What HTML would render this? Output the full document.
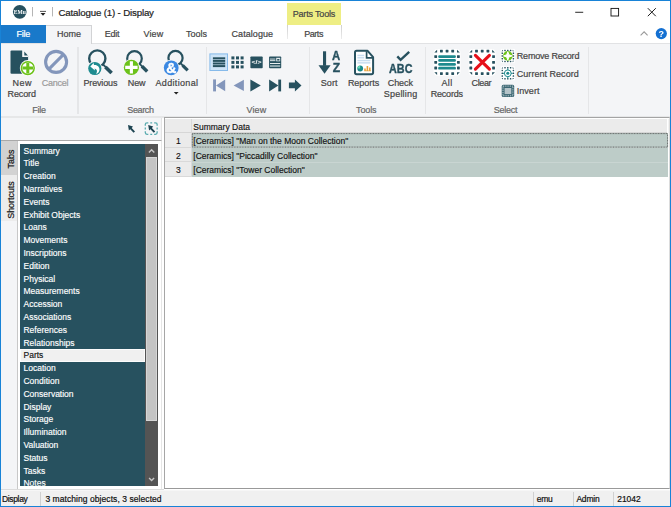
<!DOCTYPE html>
<html><head><meta charset="utf-8"><title>Catalogue (1) - Display</title>
<style>
*{box-sizing:border-box;margin:0;padding:0}
html,body{width:671px;height:507px;overflow:hidden;background:#fff}
body{position:relative;font-family:"Liberation Sans",sans-serif;font-size:9px;color:#444}
.a{position:absolute}
.t{position:absolute;white-space:nowrap;line-height:11px;height:11px;font-size:9px;color:#444;-webkit-text-stroke:0.2px}
.c{text-align:center;transform:translateX(-50%)}
.gl{color:#666}
.li{position:absolute;left:20.2px;width:124.6px;height:12.8px;line-height:12.8px;font-size:8.5px;color:#fff;padding-left:3.3px;padding-top:0.7px;white-space:nowrap;-webkit-text-stroke:0.15px}
.sep{position:absolute;top:46.5px;height:67.3px;width:1.4px;background:#e5e6e8}
.st{position:absolute;top:493.5px;white-space:nowrap;line-height:11px;font-size:8.5px;color:#111}
.gt{position:absolute;white-space:nowrap;line-height:14.4px;font-size:8.5px;color:#111;-webkit-text-stroke:0.15px}
svg{position:absolute;overflow:visible}
</style></head><body>
<!-- title bar -->
<div class="a" style="left:0;top:0;width:671px;height:25px;background:#fff"></div>
<!-- ribbon bg -->
<div class="a" style="left:0;top:25px;width:671px;height:18px;background:#fff"></div>
<div class="a" id="ribbon" style="left:0;top:43px;width:671px;height:74px;background:#f4f5f7"></div>
<div class="a" style="left:0;top:116px;width:671px;height:2.1px;background:#e6e7e8"></div><div class="a" style="left:0;top:118.1px;width:671px;height:0.8px;background:#fdfdfd"></div>
<!-- tabs -->
<div class="a" style="left:0;top:42.7px;width:671px;height:1px;background:#e1e2e4"></div>
<div class="a" style="left:1px;top:24.8px;width:44.6px;height:17.9px;background:#1979ca"></div>
<div class="a" style="left:45.6px;top:24.8px;width:46.5px;height:19px;background:#f4f5f7;border:1px solid #d2d3d5;border-bottom:none;border-left:none"></div>
<div class="a" style="left:287.2px;top:3.2px;width:54.2px;height:21.6px;background:#eeee84"></div>
<div class="a" style="left:286.9px;top:24.8px;width:1px;height:14.4px;background:linear-gradient(#cfcfcf,#ececec)"></div><div class="a" style="left:340.7px;top:24.8px;width:1px;height:14.4px;background:linear-gradient(#cfcfcf,#ececec)"></div>
<div class="t" style="left:58.50px;top:7.14px;font-size:9.7px;letter-spacing:-0.164px;color:#222">Catalogue (1) - Display</div>
<div class="t" style="left:16.40px;top:28.88px;font-size:9.0px;letter-spacing:-0.233px;color:#fff">File</div>
<div class="t" style="left:57.10px;top:28.88px;font-size:9.0px;letter-spacing:-0.071px;color:#444">Home</div>
<div class="t" style="left:104.70px;top:28.88px;font-size:9.0px;letter-spacing:-0.202px;color:#444">Edit</div>
<div class="t" style="left:143.40px;top:28.88px;font-size:9.0px;letter-spacing:0.177px;color:#444">View</div>
<div class="t" style="left:186.10px;top:28.88px;font-size:9.0px;letter-spacing:-0.002px;color:#444">Tools</div>
<div class="t" style="left:231.50px;top:28.88px;font-size:9.0px;letter-spacing:0.071px;color:#444">Catalogue</div>
<div class="t" style="left:304.30px;top:28.88px;font-size:9.0px;letter-spacing:-0.477px;color:#444">Parts</div>
<div class="t" style="left:292.70px;top:8.68px;font-size:9.0px;letter-spacing:-0.175px;color:#444">Parts Tools</div>

<!-- ribbon labels -->
<div class="t" style="left:12.60px;top:78.38px;font-size:9.0px;letter-spacing:0.436px;color:#444">New</div>
<div class="t" style="left:7.60px;top:88.88px;font-size:9.0px;letter-spacing:-0.123px;color:#444">Record</div>
<div class="t" style="left:41.80px;top:78.38px;font-size:9.0px;letter-spacing:-0.243px;color:#9b9b9b">Cancel</div>
<div class="t" style="left:32.30px;top:104.88px;font-size:9.0px;letter-spacing:-0.266px;color:#666">File</div>
<div class="t" style="left:83.50px;top:78.38px;font-size:9.0px;letter-spacing:-0.160px;color:#444">Previous</div>
<div class="t" style="left:127.80px;top:78.38px;font-size:9.0px;letter-spacing:-0.163px;color:#444">New</div>
<div class="t" style="left:155.50px;top:78.38px;font-size:9.0px;letter-spacing:0.330px;color:#444">Additional</div>
<div class="t" style="left:127.30px;top:104.88px;font-size:9.0px;letter-spacing:-0.362px;color:#666">Search</div>
<div class="t" style="left:246.50px;top:104.88px;font-size:9.0px;letter-spacing:0.111px;color:#666">View</div>
<div class="t" style="left:320.70px;top:78.38px;font-size:9.0px;letter-spacing:0.131px;color:#444">Sort</div>
<div class="t" style="left:347.90px;top:78.38px;font-size:9.0px;letter-spacing:-0.035px;color:#444">Reports</div>
<div class="t" style="left:387.80px;top:78.38px;font-size:9.0px;letter-spacing:-0.106px;color:#444">Check</div>
<div class="t" style="left:383.70px;top:88.88px;font-size:9.0px;letter-spacing:0.225px;color:#444">Spelling</div>
<div class="t" style="left:356.00px;top:104.88px;font-size:9.0px;letter-spacing:-0.101px;color:#666">Tools</div>
<div class="t" style="left:441.50px;top:78.38px;font-size:9.0px;letter-spacing:0.350px;color:#444">All</div>
<div class="t" style="left:430.70px;top:88.88px;font-size:9.0px;letter-spacing:-0.203px;color:#444">Records</div>
<div class="t" style="left:471.50px;top:78.38px;font-size:9.0px;letter-spacing:-0.352px;color:#444">Clear</div>
<div class="t" style="left:516.80px;top:51.18px;font-size:9.0px;letter-spacing:-0.202px;color:#444">Remove Record</div>
<div class="t" style="left:516.80px;top:69.08px;font-size:9.0px;letter-spacing:0.029px;color:#444">Current Record</div>
<div class="t" style="left:516.80px;top:86.38px;font-size:9.0px;letter-spacing:0.018px;color:#444">Invert</div>
<div class="t" style="left:493.70px;top:104.88px;font-size:9.0px;letter-spacing:-0.242px;color:#666">Select</div>
<div class="sep" style="left:77.2px"></div>
<div class="sep" style="left:205.6px"></div>
<div class="sep" style="left:309px"></div>
<div class="sep" style="left:424.6px"></div>
<div class="sep" style="left:587.7px"></div>

<!-- left toolbar strip -->
<div class="a" style="left:0;top:118.2px;width:161.6px;height:22.6px;background:#f4f5f7;border-right:1px solid #e3e3e3;border-bottom:1px solid #a9a9a9"></div>
<!-- left panel -->
<div class="a" style="left:0;top:140.8px;width:17.6px;height:348.4px;background:#f4f5f7;border-right:1px solid #c8c8c8"></div>
<div class="a" style="left:1px;top:141px;width:16px;height:34.4px;background:#d2d2d2"></div>
<div class="a" style="left:1px;top:175.4px;width:16px;height:45.6px;background:#ececec"></div>
<div class="a" style="left:1px;top:141px;width:16px;height:34.4px"><div class="t" style="left:10.4px;top:17.9px;font-size:8.9px;color:#111;transform:translate(-50%,-50%) rotate(-90deg)">Tabs</div></div>
<div class="a" style="left:1px;top:175.4px;width:16px;height:45.6px"><div class="t" style="left:10.4px;top:24.5px;font-size:8.9px;color:#111;transform:translate(-50%,-50%) rotate(-90deg)">Shortcuts</div></div>
<div class="a" style="left:20.2px;top:144px;width:124.6px;height:341.8px;background:#27515f;overflow:hidden"></div>
<div class="a" style="left:0;top:0;width:671px;height:485.8px;overflow:hidden;clip-path:inset(144px 0 0 0)">
<div class="li" style="top:144.0px">Summary</div>
<div class="li" style="top:156.8px">Title</div>
<div class="li" style="top:169.6px">Creation</div>
<div class="li" style="top:182.4px">Narratives</div>
<div class="li" style="top:195.2px">Events</div>
<div class="li" style="top:208.0px">Exhibit Objects</div>
<div class="li" style="top:220.8px">Loans</div>
<div class="li" style="top:233.6px">Movements</div>
<div class="li" style="top:246.4px">Inscriptions</div>
<div class="li" style="top:259.2px">Edition</div>
<div class="li" style="top:272.0px">Physical</div>
<div class="li" style="top:284.8px">Measurements</div>
<div class="li" style="top:297.6px">Accession</div>
<div class="li" style="top:310.4px">Associations</div>
<div class="li" style="top:323.2px">References</div>
<div class="li" style="top:336.0px">Relationships</div>
<div class="li" style="top:348.8px;background:#f0f0f0;color:#111;box-shadow:inset 0 0 0 0.8px #fff">Parts</div>
<div class="li" style="top:361.6px">Location</div>
<div class="li" style="top:374.4px">Condition</div>
<div class="li" style="top:387.2px">Conservation</div>
<div class="li" style="top:400.0px">Display</div>
<div class="li" style="top:412.8px">Storage</div>
<div class="li" style="top:425.6px">Illumination</div>
<div class="li" style="top:438.4px">Valuation</div>
<div class="li" style="top:451.2px">Status</div>
<div class="li" style="top:464.0px">Tasks</div>
<div class="li" style="top:476.8px">Notes</div>
</div>
<!-- scrollbar -->
<div class="a" style="left:144.9px;top:144.2px;width:12.85px;height:341.6px;background:#545454"></div>
<div class="a" style="left:146.1px;top:157.2px;width:10.8px;height:264.3px;background:#c4c4c4;border:0.6px solid #d6d6d6"></div>
<svg style="left:0;top:0" width="671" height="507" viewBox="0 0 671 507"><path d="M148.9 152.5 L151.6 149.8 L154.3 152.5" fill="none" stroke="#c6c6c6" stroke-width="1.45"/><path d="M149.1 478 L151.6 480.5 L154.1 478" fill="none" stroke="#c6c6c6" stroke-width="1.45"/></svg>
<div class="a" style="left:160.6px;top:140.8px;width:1.4px;height:348.4px;background:#e6e6e6"></div>

<!-- grid -->
<div class="a" style="left:164.1px;top:116.9px;width:506px;height:372.6px;background:#fff;border:1px solid #999;border-top-color:#a4a4a4;border-left-color:#a6a6a6;border-right-color:#dcdcdc"></div>
<div class="a" style="left:165.3px;top:119px;width:502.2px;height:14.1px;background:#ebebeb;border-bottom:1px solid #d6d6d6"></div><div class="a" style="left:667.5px;top:119px;width:1.7px;height:14.1px;background:#f2f2f2"></div>
<div class="a" style="left:165.3px;top:133.1px;width:26px;height:43.4px;background:#ebebeb"></div>
<div class="a" style="left:191.5px;top:133.1px;width:476.4px;height:43.5px;background:#bdccc8"></div>
<div class="a" style="left:190.9px;top:118.5px;width:1px;height:58px;background:#d9d9d9"></div>
<div class="a" style="left:165.3px;top:147px;width:26px;height:1px;background:#d9d9d9"></div>
<div class="a" style="left:165.3px;top:161.4px;width:26px;height:1px;background:#d9d9d9"></div>
<div class="a" style="left:165.3px;top:175.8px;width:26px;height:1px;background:#d9d9d9"></div>
<div class="a" style="left:191.5px;top:147.1px;width:476.6px;height:0.8px;background:#c9d5d2"></div>
<div class="a" style="left:191.5px;top:161.5px;width:476.6px;height:0.8px;background:#c9d5d2"></div>
<svg style="left:0;top:0" width="671" height="200" viewBox="0 0 671 200"><rect x="192.3" y="133.6" width="475.3" height="13.5" fill="none" stroke="#4a4a4a" stroke-width="0.8" stroke-dasharray="1 0.6"/></svg>
<div class="gt" style="left:193.3px;top:119.5px">Summary Data</div>
<div class="gt" style="left:178.3px;top:134.2px;transform:translateX(-50%)">1</div>
<div class="gt" style="left:178.3px;top:148.6px;transform:translateX(-50%)">2</div>
<div class="gt" style="left:178.3px;top:163px;transform:translateX(-50%)">3</div>
<div class="gt" style="left:193.3px;top:134.2px">[Ceramics] "Man on the Moon Collection"</div>
<div class="gt" style="left:193.3px;top:148.6px">[Ceramics] "Piccadilly Collection"</div>
<div class="gt" style="left:193.3px;top:163px">[Ceramics] "Tower Collection"</div>

<!-- status bar -->
<div class="a" style="left:0;top:488.6px;width:164px;height:1px;background:#dcdcdc"></div><div class="a" id="status" style="left:0;top:489.5px;width:671px;height:17.5px;background:#f0f0f0;border-top:1px solid #f6f6f6"></div>
<div class="t" style="left:1.90px;top:493.65px;font-size:8.5px;letter-spacing:-0.329px;color:#111">Display</div>
<div class="t" style="left:45.40px;top:493.65px;font-size:8.5px;letter-spacing:0.064px;color:#111">3 matching objects, 3 selected</div>
<div class="a" style="left:40.4px;top:491.5px;width:1px;height:14px;background:#d0d0d0"></div>
<div class="a" style="left:533px;top:491.5px;width:1px;height:14px;background:#d0d0d0"></div>
<div class="a" style="left:573px;top:491.5px;width:1px;height:14px;background:#d0d0d0"></div>
<div class="a" style="left:613.4px;top:491.5px;width:1px;height:14px;background:#d0d0d0"></div>
<div class="t" style="left:536.70px;top:493.65px;font-size:8.5px;letter-spacing:-0.216px;color:#111">emu</div>
<div class="t" style="left:576.40px;top:493.65px;font-size:8.5px;letter-spacing:-0.199px;color:#111">Admin</div>
<div class="t" style="left:617.20px;top:493.65px;font-size:8.5px;letter-spacing:-0.035px;color:#111">21042</div>

<svg style="left:0;top:0;will-change:transform" width="671" height="507" viewBox="0 0 671 507" font-family="Liberation Sans, sans-serif">
<!-- logo + quick access -->
<circle cx="19.75" cy="11.8" r="6.85" fill="#27515f"/>
<text x="19.8" y="13.9" font-size="6.4" font-weight="bold" font-family="Liberation Serif, serif" fill="#fff" text-anchor="middle" textLength="12" lengthAdjust="spacingAndGlyphs">EMu</text>
<rect x="32" y="7" width="1" height="9.4" fill="#b5b5b5"/>
<rect x="52" y="7" width="1" height="9.4" fill="#b5b5b5"/>
<rect x="40" y="10.9" width="6" height="0.85" fill="#333"/>
<path d="M40.5 13.1 H45.5 L43 15.8 Z" fill="#222"/>
<!-- window controls -->
<rect x="575.2" y="11.8" width="8" height="0.9" fill="#111"/>
<rect x="611" y="8.4" width="7.6" height="7.6" fill="none" stroke="#111" stroke-width="0.9"/>
<path d="M647.8 8.2 L655.8 16.2 M655.8 8.2 L647.8 16.2" stroke="#111" stroke-width="0.95" fill="none"/>
<path d="M640.6 35.4 L644.1 31.9 L647.6 35.4" stroke="#9a9a9a" stroke-width="1.1" fill="none"/>
<circle cx="661.3" cy="33.6" r="5.6" fill="#1470d2"/>
<text x="661.3" y="36.8" font-size="9" font-weight="bold" fill="#fff" text-anchor="middle">?</text>

<!-- New Record -->
<path d="M11.6 50.5 H22.6 L28.1 56.2 V72.7 Q28.1 73.7 27.1 73.7 H11.6 Q10.5 73.7 10.5 72.7 V51.5 Q10.5 50.5 11.6 50.5 Z" fill="#27515f"/>
<path d="M23.2 50 L28.6 55.6 V57 H22.2 V50 Z" fill="#f4f5f7"/>
<path d="M24.3 51.6 L27.9 55.4 H24.3 Z" fill="#27515f"/>
<circle cx="27.8" cy="68.1" r="8" fill="#fcfcfd"/>
<circle cx="27.8" cy="68.1" r="6.4" fill="#fff" stroke="#6cc21a" stroke-width="1.5"/>
<path d="M27.8 62.8 V73.4 M22.5 68.1 H33.1" stroke="#6cc21a" stroke-width="3" fill="none"/>
<!-- Cancel -->
<circle cx="56.1" cy="61.9" r="10.5" fill="none" stroke="#8396bb" stroke-width="3.1"/>
<path d="M48.9 69.1 L63.3 54.7" stroke="#8396bb" stroke-width="3.1" fill="none"/>

<!-- Previous -->
<circle cx="97.3" cy="58.5" r="8.1" fill="none" stroke="#27515f" stroke-width="2.4"/>
<path d="M102.6 64 L106 67.4" stroke="#27515f" stroke-width="1.8" fill="none"/>
<path d="M105.4 66.9 L111.6 73.1" stroke="#27515f" stroke-width="3.6" fill="none"/>
<circle cx="94.8" cy="68.5" r="7.4" fill="#f4f5f7"/>
<circle cx="94.8" cy="68.5" r="6.6" fill="#1f8c90"/>
<path d="M90.3 66.6 L93.6 63 L94 65 C97.4 64.6 100 67 99.4 70.6 C99 72.6 97.4 73.8 96 74 C97.4 72.2 97.6 69.4 94.6 68.6 L95 70.6 Z" fill="#fff"/>

<!-- New search -->
<circle cx="134.5" cy="58.5" r="7.3" fill="none" stroke="#27515f" stroke-width="2.2"/>
<path d="M139.4 63.6 L142.6 66.8" stroke="#27515f" stroke-width="1.8" fill="none"/>
<path d="M141.9 66.3 L147.2 71.5" stroke="#27515f" stroke-width="3.4" fill="none"/>
<circle cx="131.4" cy="67.4" r="8.3" fill="#f4f5f7"/>
<circle cx="131.4" cy="67.4" r="7.6" fill="#6cc21a"/>
<path d="M131.4 61.2 V73.6 M125.2 67.4 H137.6" stroke="#fff" stroke-width="3.1" fill="none"/>

<!-- Additional -->
<circle cx="175.5" cy="58" r="7.1" fill="none" stroke="#27515f" stroke-width="2.2"/>
<path d="M180.3 63 L183.4 66.1" stroke="#27515f" stroke-width="1.8" fill="none"/>
<path d="M182.6 65.4 L187.7 70.4" stroke="#27515f" stroke-width="3.2" fill="none"/>
<circle cx="171.2" cy="67.8" r="8.1" fill="#f4f5f7"/>
<circle cx="171.2" cy="67.8" r="7.4" fill="#3b88e2"/>
<text x="171.3" y="72.7" font-size="14" font-weight="bold" fill="#fff" stroke="#fff" stroke-width="0.4" text-anchor="middle">&amp;</text>
<path d="M173.8 92 H178.6 L176.2 94.6 Z" fill="#222"/>

<!-- View group -->
<rect x="209.9" y="53.9" width="17.6" height="16.6" fill="#cde4f7" stroke="#86baea" stroke-width="1"/>
<g fill="#27515f">
<rect x="212.9" y="57.3" width="12.3" height="2"/><rect x="212.9" y="59.9" width="12.3" height="2"/><rect x="212.9" y="62.5" width="12.3" height="2"/><rect x="212.9" y="65.1" width="12.3" height="2"/>
<rect x="231.4" y="56.4" width="3" height="3"/><rect x="236" y="56.4" width="3" height="3"/><rect x="240.6" y="56.4" width="3" height="3"/>
<rect x="231.4" y="60.9" width="3" height="3"/><rect x="236" y="60.9" width="3" height="3"/><rect x="240.6" y="60.9" width="3" height="3"/>
<rect x="231.4" y="65.4" width="3" height="3"/><rect x="236" y="65.4" width="3" height="3"/><rect x="240.6" y="65.4" width="3" height="3"/>
<rect x="250.4" y="56.4" width="12.3" height="11.8" rx="0.8"/>
<rect x="269.1" y="56.4" width="12.1" height="11.8" rx="0.8"/>
</g>
<text x="256.55" y="64.3" font-size="5.6" font-weight="bold" fill="#fff" text-anchor="middle" textLength="10" lengthAdjust="spacingAndGlyphs">&lt;/&gt;</text>
<g fill="#e6ecee">
<rect x="270" y="58.6" width="5.4" height="0.9"/><rect x="270" y="60.2" width="5.4" height="0.9"/>
<rect x="276.2" y="57.8" width="4" height="3.5"/>
<rect x="270" y="63" width="10.2" height="1"/>
<rect x="270" y="65.2" width="10.2" height="1.7" fill="#9fb3ba"/>
</g>
<rect x="277.2" y="59" width="2.2" height="1.6" fill="#27515f"/>
<g fill="#8396bb">
<rect x="213.1" y="79.4" width="2.9" height="12"/><path d="M216 85.4 L225.2 79.5 V91.3 Z"/>
<path d="M233.6 85.4 L243.9 79.7 V91.1 Z"/>
</g>
<g fill="#27515f">
<path d="M250.4 79.6 L260.8 85.5 L250.4 91.4 Z"/>
<path d="M269.1 79.6 L278.4 85.5 L269.1 91.4 Z"/><rect x="278.3" y="79.6" width="2.8" height="11.8"/>
<path d="M288.9 82.6 H294.9 V79.4 L301.5 85.5 L294.9 91.6 V88.3 H288.9 Z"/>
</g>

<!-- Sort -->
<g fill="#27515f">
<rect x="323" y="51.3" width="3.1" height="14.5"/>
<path d="M318.5 65.3 H330.6 L324.55 73.7 Z"/>
</g>
<text x="336.2" y="60.1" font-size="12" font-weight="bold" fill="#27515f" stroke="#27515f" stroke-width="0.35" text-anchor="middle" textLength="8.2" lengthAdjust="spacingAndGlyphs">A</text>
<text x="336.4" y="71.6" font-size="12" font-weight="bold" fill="#27515f" stroke="#27515f" stroke-width="0.35" text-anchor="middle" textLength="7.4" lengthAdjust="spacingAndGlyphs">Z</text>
<!-- Reports -->
<path d="M356.6 50.7 H367.4 L373.1 57.2 V72.6 Q373.1 74.3 371.4 74.3 H356.6 Q355 74.3 355 72.6 V52.4 Q355 50.7 356.6 50.7 Z" fill="#fff" stroke="#27515f" stroke-width="2" stroke-linejoin="round"/>
<path d="M366.6 51.2 V57.8 H372.8" fill="none" stroke="#27515f" stroke-width="1.7"/>
<g fill="#c9def0">
<rect x="357.4" y="54.7" width="6.8" height="1.5"/><rect x="357.4" y="57" width="6.8" height="1.5"/>
<rect x="357.4" y="59.8" width="13" height="1.5"/><rect x="357.4" y="62.1" width="13" height="1.5"/>
</g>
<circle cx="360.2" cy="68.5" r="2.9" fill="#1b8b8c"/>
<path d="M360.2 68.5 V65.7 A2.8 2.8 0 0 0 357.4 68.5 Z" fill="#63d8b4"/>
<path d="M364.2 70.6 V68.6 H365.8 V70.6 H366.6 V66 H368.2 V70.6 H369 V67.6 H370.6 V70.6 H371 V71.3 H364.2 Z" fill="#e9a23b"/>
<!-- ABC -->
<path d="M397.3 56.4 L400.6 59.8 L409.2 51.9" fill="none" stroke="#27515f" stroke-width="2.4"/>
<text x="400.75" y="73.2" font-size="12" font-weight="bold" fill="#27515f" stroke="#27515f" stroke-width="0.35" text-anchor="middle" textLength="23.4" lengthAdjust="spacingAndGlyphs">ABC</text>

<!-- All Records -->
<rect x="433.6" y="48.9" width="26.9" height="26.8" rx="4" fill="#fff"/><g fill="#27515f"><path d="M437.10 52.45 L437.10 49.65 L434.30 52.45 Z"/><rect x="434.30" y="55.20" width="2.80" height="2.80" rx="0.4"/><rect x="434.30" y="60.90" width="2.80" height="2.80" rx="0.4"/><rect x="434.30" y="66.60" width="2.80" height="2.80" rx="0.4"/><path d="M437.10 72.20 L437.10 75.00 L434.30 72.20 Z"/><rect x="440.00" y="49.65" width="2.80" height="2.80" rx="0.4"/><rect x="440.00" y="72.20" width="2.80" height="2.80" rx="0.4"/><rect x="445.65" y="49.65" width="2.80" height="2.80" rx="0.4"/><rect x="445.65" y="72.20" width="2.80" height="2.80" rx="0.4"/><rect x="451.30" y="49.65" width="2.80" height="2.80" rx="0.4"/><rect x="451.30" y="72.20" width="2.80" height="2.80" rx="0.4"/><path d="M457.00 52.45 L457.00 49.65 L459.80 52.45 Z"/><rect x="457.00" y="55.20" width="2.80" height="2.80" rx="0.4"/><rect x="457.00" y="60.90" width="2.80" height="2.80" rx="0.4"/><rect x="457.00" y="66.60" width="2.80" height="2.80" rx="0.4"/><path d="M457.00 72.20 L457.00 75.00 L459.80 72.20 Z"/></g>
<g fill="#1e8a8e">
<rect x="438.2" y="55.2" width="17.7" height="2.8" rx="1.2"/><rect x="438.2" y="59" width="17.7" height="2.8" rx="1.2"/><rect x="438.2" y="62.9" width="17.7" height="2.8" rx="1.2"/><rect x="438.2" y="66.8" width="17.7" height="2.8" rx="1.2"/>
</g>
<!-- Clear -->
<rect x="468.7" y="48.9" width="26.9" height="26.8" rx="4" fill="#fff"/><g fill="#27515f"><path d="M472.20 52.45 L472.20 49.65 L469.40 52.45 Z"/><rect x="469.40" y="55.20" width="2.80" height="2.80" rx="0.4"/><rect x="469.40" y="60.90" width="2.80" height="2.80" rx="0.4"/><rect x="469.40" y="66.60" width="2.80" height="2.80" rx="0.4"/><path d="M472.20 72.20 L472.20 75.00 L469.40 72.20 Z"/><rect x="475.10" y="49.65" width="2.80" height="2.80" rx="0.4"/><rect x="475.10" y="72.20" width="2.80" height="2.80" rx="0.4"/><rect x="480.80" y="49.65" width="2.80" height="2.80" rx="0.4"/><rect x="480.80" y="72.20" width="2.80" height="2.80" rx="0.4"/><rect x="486.50" y="49.65" width="2.80" height="2.80" rx="0.4"/><rect x="486.50" y="72.20" width="2.80" height="2.80" rx="0.4"/><path d="M492.15 52.45 L492.15 49.65 L494.95 52.45 Z"/><rect x="492.15" y="55.20" width="2.80" height="2.80" rx="0.4"/><rect x="492.15" y="60.90" width="2.80" height="2.80" rx="0.4"/><rect x="492.15" y="66.60" width="2.80" height="2.80" rx="0.4"/><path d="M492.15 72.20 L492.15 75.00 L494.95 72.20 Z"/></g>
<path d="M475.4 55.4 L489.4 69.1 M489.4 55.4 L475.4 69.1" stroke="#e6101a" stroke-width="3.1" stroke-linecap="round" fill="none"/>

<!-- Remove Record -->
<rect x="500.8" y="48.9" width="14.1" height="14" fill="#fff"/><g fill="#27515f"><path d="M503.00 51.15 L503.00 49.65 L501.50 51.15 Z"/><rect x="501.50" y="52.40" width="1.50" height="1.50" rx="0.4"/><rect x="501.50" y="55.15" width="1.50" height="1.50" rx="0.4"/><rect x="501.50" y="57.95" width="1.50" height="1.50" rx="0.4"/><path d="M503.00 60.70 L503.00 62.20 L501.50 60.70 Z"/><rect x="504.25" y="49.65" width="1.50" height="1.50" rx="0.4"/><rect x="504.25" y="60.70" width="1.50" height="1.50" rx="0.4"/><rect x="507.05" y="49.65" width="1.50" height="1.50" rx="0.4"/><rect x="507.05" y="60.70" width="1.50" height="1.50" rx="0.4"/><rect x="509.85" y="49.65" width="1.50" height="1.50" rx="0.4"/><rect x="509.85" y="60.70" width="1.50" height="1.50" rx="0.4"/><path d="M512.65 51.15 L512.65 49.65 L514.15 51.15 Z"/><rect x="512.65" y="52.40" width="1.50" height="1.50" rx="0.4"/><rect x="512.65" y="55.15" width="1.50" height="1.50" rx="0.4"/><rect x="512.65" y="57.95" width="1.50" height="1.50" rx="0.4"/><path d="M512.65 60.70 L512.65 62.20 L514.15 60.70 Z"/></g>
<circle cx="507.8" cy="55.9" r="4.8" fill="#6cc21a"/>
<path d="M507.8 51.7 L508.9 54.8 L512 55.9 L508.9 57 L507.8 60.1 L506.7 57 L503.6 55.9 L506.7 54.8 Z" fill="#fff" stroke="#fff" stroke-width="1" stroke-linejoin="round"/>
<!-- Current Record -->
<rect x="500.8" y="66.3" width="14.1" height="14" fill="#fff"/><g fill="#27515f"><path d="M503.00 68.45 L503.00 66.95 L501.50 68.45 Z"/><rect x="501.50" y="69.75" width="1.50" height="1.50" rx="0.4"/><rect x="501.50" y="72.55" width="1.50" height="1.50" rx="0.4"/><rect x="501.50" y="75.35" width="1.50" height="1.50" rx="0.4"/><path d="M503.00 78.10 L503.00 79.60 L501.50 78.10 Z"/><rect x="504.25" y="66.95" width="1.50" height="1.50" rx="0.4"/><rect x="504.25" y="78.10" width="1.50" height="1.50" rx="0.4"/><rect x="507.05" y="66.95" width="1.50" height="1.50" rx="0.4"/><rect x="507.05" y="78.10" width="1.50" height="1.50" rx="0.4"/><rect x="509.85" y="66.95" width="1.50" height="1.50" rx="0.4"/><rect x="509.85" y="78.10" width="1.50" height="1.50" rx="0.4"/><path d="M512.65 68.45 L512.65 66.95 L514.15 68.45 Z"/><rect x="512.65" y="69.75" width="1.50" height="1.50" rx="0.4"/><rect x="512.65" y="72.55" width="1.50" height="1.50" rx="0.4"/><rect x="512.65" y="75.35" width="1.50" height="1.50" rx="0.4"/><path d="M512.65 78.10 L512.65 79.60 L514.15 78.10 Z"/></g>
<circle cx="507.8" cy="73.3" r="3.4" fill="#fff" stroke="#1e8a8e" stroke-width="1"/>
<circle cx="507.8" cy="73.3" r="1.5" fill="#1e8a8e"/>
<path d="M507.8 68.4 V70.2 M507.8 76.4 V78.2 M502.9 73.3 H504.7 M510.9 73.3 H512.7" stroke="#1e8a8e" stroke-width="1"/>
<!-- Invert -->
<rect x="501.7" y="84.8" width="12.5" height="12.3" rx="1.6" fill="#3b6672"/>
<rect x="503" y="86.1" width="9.9" height="9.7" fill="none" stroke="#dfe8ea" stroke-width="0.9" stroke-dasharray="0.9 0.9"/>
<rect x="504.6" y="88" width="6.7" height="6.1" fill="#b4c3c8"/>

<!-- left toolbar arrows -->
<g fill="#1d4452" stroke="none">
<path d="M128 125.1 L133 126.6 L131.7 127.9 L135 131.5 L133.6 132.8 L130.2 129.3 L128.9 130.4 Z"/>
<path d="M148.2 125.1 L153.2 126.6 L151.9 127.9 L155.2 131.5 L153.8 132.8 L150.4 129.3 L149.1 130.4 Z"/>
</g>
<path d="M145.3 125.85 V124.55 Q145.3 122.85 147.0 122.85 H148.3 M154.15 122.85 H155.45000000000002 Q157.15 122.85 157.15 124.55 V125.85 M157.15 131.3 V132.60000000000002 Q157.15 134.3 155.45000000000002 134.3 H154.15 M148.3 134.3 H147.0 Q145.3 134.3 145.3 132.60000000000002 V131.3 M150.28 122.85 H152.18 M150.28 134.3 H152.18 M145.3 127.62 V129.52 M157.15 127.62 V129.52" fill="none" stroke="#5aacb0" stroke-width="1.3"/>
</svg>


<!-- window frame -->
<div class="a" style="left:0;top:0;width:671px;height:1.2px;background:#1883d7"></div>
<div class="a" style="left:0;top:0;width:1.25px;height:507px;background:#1883d7"></div>
<div class="a" style="left:669.7px;top:0;width:1.3px;height:507px;background:#1883d7"></div>
<div class="a" style="left:0;top:505.8px;width:671px;height:1.2px;background:#1883d7"></div>
</body></html>
